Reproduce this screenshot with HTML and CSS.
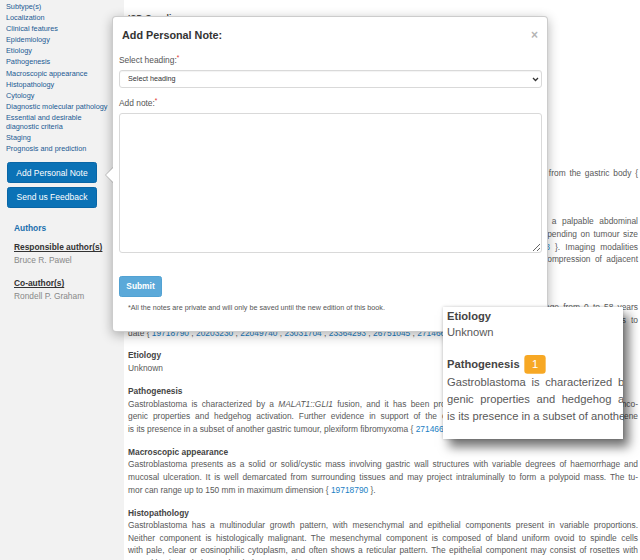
FILE: index.html
```html
<!DOCTYPE html>
<html lang="en">
  <head>
    <meta charset="UTF-8" />
    <title>Gastroblastoma</title>
    <link rel="stylesheet" href="styles.css">
  </head>
  <body>
    <div class="page">
      <!-- left navigation -->
      <aside class="sidebar">
        <ul class="toc">
          <li><a href="#">Definition</a></li>
          <li><a href="#">ICD-O coding</a></li>
          <li><a href="#">ICD-11 coding</a></li>
          <li><a href="#">Related terminology</a></li>
          <li><a href="#">Subtype(s)</a></li>
          <li><a href="#">Localization</a></li>
          <li><a href="#">Clinical features</a></li>
          <li><a href="#">Epidemiology</a></li>
          <li><a href="#">Etiology</a></li>
          <li><a href="#">Pathogenesis</a></li>
          <li><a href="#">Macroscopic appearance</a></li>
          <li><a href="#">Histopathology</a></li>
          <li><a href="#">Cytology</a></li>
          <li><a href="#">Diagnostic molecular pathology</a></li>
          <li><a href="#">Essential and desirable diagnostic criteria</a></li>
          <li><a href="#">Staging</a></li>
          <li><a href="#">Prognosis and prediction</a></li>
        </ul>

        <div class="side-actions">
          <button class="side-btn">Add Personal Note</button>
          <button class="side-btn">Send us Feedback</button>
        </div>

        <div class="authors">
          <h4 class="authors-title">Authors</h4>
          <h5>Responsible author(s)</h5>
          <p>Bruce R. Pawel</p>
          <h5 class="co">Co-author(s)</h5>
          <p>Rondell P. Graham</p>
        </div>
      </aside>

      <!-- chapter text -->
      <main class="content">
        <div class="doc">
          <section class="sec">
            <h3>Definition</h3>
            <p>Gastroblastoma is a biphasic tumour with epithelial and spindle cell components.</p>
          </section>
          <section class="sec">
            <h3>ICD-O coding</h3>
            <p>8976/1 Gastroblastoma</p>
          </section>
          <section class="sec">
            <h3>ICD-11 coding</h3>
            <p>2B5Y &amp; XH6SH5 Gastroblastoma</p>
          </section>
          <section class="sec">
            <h3>Related terminology</h3>
            <p>None</p>
          </section>
          <section class="sec">
            <h3>Subtype(s)</h3>
            <p>None</p>
          </section>
          <section class="sec">
            <h3>Localization</h3>
            <p><span class="ln">Gastroblastoma arises in the stomach, usually in the antrum, but tumours have also been reported to arise from the gastric body {</span><a class="ref" href="#">19718790</a> , <a class="ref" href="#">20203230</a> }.</p>
          </section>
          <section class="sec">
            <h3>Clinical features</h3>
            <p><span class="ln">Patients present with abdominal pain, gastrointestinal bleeding with anaemia, weight loss, vomiting, or a palpable abdominal</span><span class="ln">mass. Some tumours are detected incidentally, and the duration of symptoms ranges from days to years, depending on tumour size</span><span class="ln">and location. Rare tumours present with gastric outlet obstruction or perforation { <a class="ref" href="#">19718790</a> , <a class="ref" href="#">27146608</a> }. Imaging modalities</span><span class="ln">such as ultrasonography, CT and MRI show a well-circumscribed, heterogeneous mass, sometimes with compression of adjacent</span>structures.</p>
          </section>
          <section class="sec">
            <h3>Epidemiology</h3>
            <p><span class="ln">This rare tumour affects children and adults, with fewer than 20 cases described and patients ranging in age from 0 to 58 years</span><span class="ln">(median: 27 years), without a clear sex predilection. Most tumours occur in adults, as documented in the published cases to</span>date { <a class="ref" href="#">19718790</a> , <a class="ref" href="#">20203230</a> , <a class="ref" href="#">22049740</a> , <a class="ref" href="#">23031704</a> , <a class="ref" href="#">23364293</a> , <a class="ref" href="#">26751045</a> , <a class="ref" href="#">27146608</a> }.</p>
          </section>
          <section class="sec">
            <h3>Etiology</h3>
            <p>Unknown</p>
          </section>
          <section class="sec">
            <h3>Pathogenesis</h3>
            <p><span class="ln">Gastroblastoma is characterized by a <i>MALAT1::GLI1</i> fusion, and it has been proposed that the resulting fusion protein has onco-</span><span class="ln">genic properties and hedgehog activation. Further evidence in support of the oncogenic role of the <i>MALAT1::GLI1</i> fusion gene</span>is its presence in a subset of another gastric tumour, plexiform fibromyxoma { <a class="ref" href="#">27146608</a> }.</p>
          </section>
          <section class="sec">
            <h3>Macroscopic appearance</h3>
            <p><span class="ln">Gastroblastoma presents as a solid or solid/cystic mass involving gastric wall structures with variable degrees of haemorrhage and</span><span class="ln">mucosal ulceration. It is well demarcated from surrounding tissues and may project intraluminally to form a polypoid mass. The tu-</span>mor can range up to 150 mm in maximum dimension { <a class="ref" href="#">19718790</a> }.</p>
          </section>
          <section class="sec">
            <h3>Histopathology</h3>
            <p><span class="ln">Gastroblastoma has a multinodular growth pattern, with mesenchymal and epithelial components present in variable proportions.</span><span class="ln">Neither component is histologically malignant. The mesenchymal component is composed of bland uniform ovoid to spindle cells</span><span class="ln">with pale, clear or eosinophilic cytoplasm, and often shows a reticular pattern. The epithelial component may consist of rosettes with</span>central lumina, tubules or glands { <a class="ref" href="#">19718790</a> }.</p>
          </section>
        </div>
      </main>

      <!-- personal note popover -->
      <div class="note-modal">
        <div class="note-head">
          <h3>Add Personal Note:</h3>
          <button class="close" type="button">&times;</button>
        </div>
        <form class="note-body">
          <label class="field-label">Select heading:<span class="req">*</span></label>
          <div class="select-wrap">
            <select>
              <option>Select heading</option>
            </select>
            <svg class="chev" width="7" height="5" viewBox="0 0 7 5"><path d="M1 1l2.5 2.5L6 1" fill="none" stroke="#333" stroke-width="1.3"/></svg>
          </div>
          <label class="field-label second">Add note:<span class="req">*</span></label>
          <textarea></textarea>
          <button class="submit" type="button">Submit</button>
          <p class="note-hint">*All the notes are private and will only be saved until the new edition of this book.</p>
        </form>
      </div>

      <!-- magnified detail -->
      <div class="loupe">
        <div class="loupe-inner">
          <section class="sec">
            <h3>Etiology</h3>
            <p>Unknown</p>
          </section>
          <section class="sec">
            <h3>Pathogenesis <span class="badge">1</span></h3>
            <p><span class="ln">Gastroblastoma is characterized by a <i>MALAT1::GLI1</i> fusion, and it has been proposed that the resulting fusion protein has onco-</span><span class="ln">genic properties and hedgehog activation. Further evidence in support of the oncogenic role of the <i>MALAT1::GLI1</i> fusion gene</span>is its presence in a subset of another gastric tumour, plexiform fibromyxoma { <a class="ref" href="#">27146608</a> }.</p>
          </section>
        </div>
      </div>
    </div>
  </body>
</html>
```

FILE: styles.css
```css
html,
body {
  margin: 0;
  height: 100%;
}

body {
  font-family: "Liberation Sans", Arial, sans-serif;
  background-color: #fff;
  color: #595959;
  overflow: hidden;
}

.page {
  position: relative;
  display: flex;
  height: 560px;
}

/* sidebar */

.sidebar {
  width: 124px;
  flex: none;
  box-sizing: border-box;
  padding-left: 6px;
  background-color: #f2f2f2;
}

.toc {
  list-style: none;
  margin: -41.9px 0 0 0;
  padding: 0;
  width: 107px;
}

.toc li {
  font-size: 7.3px;
  line-height: 8.64px;
  margin-bottom: 2.5px;
}

.toc a {
  color: #1b5a92;
  text-decoration: none;
}

.side-actions {
  display: flex;
  flex-direction: column;
  gap: 4px;
  margin: 8.6px 0 0 1px;
}

.side-btn {
  width: 90px;
  height: 20.8px;
  padding: 0;
  border: 1px solid #0966a6;
  border-radius: 2.5px;
  background-color: #0b72b6;
  color: #fff;
  font-family: inherit;
  font-size: 8.5px;
}

.authors {
  margin: 14.5px 0 0 8px;
  font-size: 8.4px;
  line-height: 12.6px;
}

.authors-title {
  margin: 0 0 6.4px 0;
  font-size: 8.4px;
  color: #1a6fad;
}

.authors h5 {
  margin: 0;
  font-size: 8.4px;
  color: #333;
  text-decoration: underline;
}

.authors h5.co {
  margin-top: 10.8px;
}

.authors p {
  margin: 0;
  color: #888;
}

/* chapter text */

.content {
  flex: 1;
  min-width: 0;
  padding: 0 2px 0 4px;
  background-color: #fff;
}

.doc {
  margin-top: -23.3px;
}

.sec h3 {
  margin: 0;
  font-size: 8.4px;
  line-height: 12.6px;
  color: #444;
}

.sec p {
  margin: 0;
  font-size: 8.4px;
  line-height: 12.6px;
}

.sec + .sec {
  margin-top: 10.4px;
}

.ln {
  display: block;
  text-align: justify;
  text-align-last: justify;
}

.ref {
  color: #1a80c4;
  text-decoration: none;
}

/* note popover */

.note-modal {
  position: absolute;
  left: 112px;
  top: 16px;
  width: 436px;
  height: 316px;
  box-sizing: border-box;
  border: 1px solid rgba(0, 0, 0, 0.2);
  border-radius: 4px;
  background-color: #fff;
  box-shadow: 0 3px 12px rgba(0, 0, 0, 0.3);
  z-index: 2;
}

.note-modal::before,
.note-modal::after {
  content: "";
  position: absolute;
  border-style: solid;
  border-color: transparent;
  border-left-width: 0;
}

.note-modal::before {
  left: -8px;
  top: 150px;
  border-width: 8px 8px 8px 0;
  border-right-color: rgba(0, 0, 0, 0.2);
}

.note-modal::after {
  left: -7px;
  top: 151px;
  border-width: 7px 7px 7px 0;
  border-right-color: #fff;
}

.note-head {
  display: flex;
  justify-content: space-between;
  align-items: center;
  padding: 11.5px 9px 0 9px;
}

.note-head h3 {
  margin: 0;
  font-size: 10.8px;
  line-height: 13px;
  color: #333;
}

.close {
  padding: 0;
  border: none;
  background: none;
  font-family: inherit;
  font-size: 12px;
  font-weight: bold;
  line-height: 13px;
  color: #b5b5b5;
}

.note-body {
  display: flex;
  flex-direction: column;
  align-items: flex-start;
  padding: 12.2px 5px 0 6px;
}

.field-label {
  font-size: 8.4px;
  line-height: 12.6px;
  color: #555;
  margin-bottom: 3.4px;
}

.field-label.second {
  margin-top: 9.7px;
  margin-bottom: 2.7px;
}

.req {
  color: #e0312b;
  font-size: 6.5px;
  vertical-align: top;
  line-height: 8px;
}

.select-wrap {
  position: relative;
  align-self: stretch;
}

.select-wrap select {
  display: block;
  width: 100%;
  height: 18px;
  padding: 0 0 0 8px;
  border: 1px solid #d9d9d9;
  border-radius: 3px;
  background-color: #fff;
  box-shadow: inset 0 1px 1px rgba(0, 0, 0, 0.05);
  font-family: inherit;
  font-size: 7.2px;
  color: #333;
  appearance: none;
}

.chev {
  position: absolute;
  right: 3px;
  top: 7px;
}

.note-body textarea {
  align-self: stretch;
  height: 140px;
  box-sizing: border-box;
  border: 1px solid #d9d9d9;
  border-radius: 3px;
  resize: vertical;
  margin: 0;
}

.submit {
  width: 43px;
  height: 21px;
  margin-top: 23px;
  padding: 0;
  border: 1px solid #52a2d3;
  border-radius: 2.5px;
  background-color: #5ba9d9;
  color: #fff;
  font-family: inherit;
  font-size: 8.4px;
  font-weight: bold;
}

.note-hint {
  margin: 7.7px 0 0 0;
  padding-left: 9px;
  font-size: 7.2px;
  line-height: 8.6px;
  color: #555;
}

/* magnified detail */

.loupe {
  position: absolute;
  left: 443px;
  top: 307px;
  width: 180px;
  height: 132px;
  overflow: hidden;
  background-color: #fff;
  box-shadow: 6px 8px 10px rgba(0, 0, 0, 0.55), 0 0 3px rgba(0, 0, 0, 0.2);
  z-index: 3;
}

.loupe-inner {
  width: 510px;
  padding: 0.5px 0 0 3px;
  transform: scale(1.3333);
  transform-origin: 0 0;
}

.badge {
  display: inline-block;
  width: 15.6px;
  height: 14.4px;
  margin-left: 1.5px;
  border-radius: 2.4px;
  background-color: #f7a824;
  color: #fff;
  font-weight: normal;
  line-height: 14.4px;
  text-align: center;
  vertical-align: middle;
}
```
